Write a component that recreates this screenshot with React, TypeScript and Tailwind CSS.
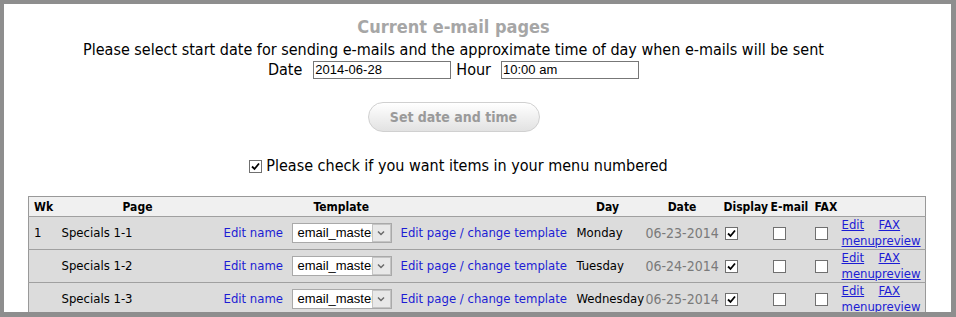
const rows = [
  { wk: "1", page: "Specials 1-1", day: "Monday", date: "06-23-2014" },
  { wk: "", page: "Specials 1-2", day: "Tuesday", date: "06-24-2014" },
  { wk: "", page: "Specials 1-3", day: "Wednesday", date: "06-25-2014" },
];

const Check = ({ on }: { on?: boolean }) => (
  <span className="inline-flex w-[13px] h-[13px] border border-[#707070] bg-white items-center justify-center align-middle">
    {on && (
      <svg width="9" height="9" viewBox="0 0 9 9">
        <path d="M1 4.5 L3.5 7 L8 1.5" fill="none" stroke="#000" strokeWidth="1.8" />
      </svg>
    )}
  </span>
);

const FakeSelect = () => (
  <div className="flex w-[100px] h-[20px] border border-[#a9a9a9] bg-white font-['Liberation_Sans',sans-serif] text-[13px] leading-[18px]">
    <span className="flex-1 overflow-hidden whitespace-nowrap pl-[5px]">email_master</span>
    <span className="w-[19px] h-[18px] bg-[#e8e8e8] border border-[#c4c4c4] flex items-center justify-center">
      <svg width="8" height="6" viewBox="0 0 8 6">
        <path d="M1 1.5 L4 4.5 L7 1.5" fill="none" stroke="#6a6a6a" strokeWidth="1.5" />
      </svg>
    </span>
  </div>
);

const App = () => {
  return (
    <div className="w-[956px] h-[317px] bg-[#8e8e8e] pt-[4px] pl-[4px] pr-[5px] pb-[5px]">
      <div className="h-full bg-white overflow-hidden font-['DejaVu_Sans_Condensed','Noto_Sans',sans-serif] text-black">
        <div className="pr-[48px] flex flex-col items-center">
          <h1 className="pt-[12px] text-[18px] leading-[22px] font-bold text-[#a6a6a6]">Current e-mail pages</h1>
          <p className="mt-[2px] text-[16px] leading-[20px] whitespace-nowrap">
            Please select start date for sending e-mails and the approximate time of day when e-mails will be sent
          </p>
          <div className="mt-[1px] flex items-center text-[16px] leading-[18px]">
            <span>Date</span>
            <input
              readOnly
              value="2014-06-28"
              className="ml-[11px] w-[138px] h-[18px] border border-[#777] px-[1px] font-['Liberation_Sans',sans-serif] text-[13px] outline-none"
            />
            <span className="ml-[5px]">Hour</span>
            <input
              readOnly
              value="10:00 am"
              className="ml-[10px] w-[138px] h-[18px] border border-[#777] px-[1px] font-['Liberation_Sans',sans-serif] text-[13px] outline-none"
            />
          </div>
          <button className="mt-[23px] w-[172px] h-[30px] rounded-full border border-[#d0d0d0] bg-gradient-to-b from-white to-[#e2e2e2] text-[14px] font-bold text-[#9a9a9a]">
            Set date and time
          </button>
          <div className="mt-[24px] ml-[10px] flex items-center gap-[4px] text-[16px] leading-[20px]">
            <Check on />
            <span>Please check if you want items in your menu numbered</span>
          </div>
        </div>

        <table className="mt-[20px] ml-[24px] w-[897px] table-fixed border-collapse border border-[#999] text-[13px] leading-[16px]">
          <colgroup>
            <col className="w-[28px]" />
            <col className="w-[162px]" />
            <col className="w-[69px]" />
            <col className="w-[108px]" />
            <col className="w-[177px]" />
            <col className="w-[70px]" />
            <col className="w-[79px]" />
            <col className="w-[48px]" />
            <col className="w-[44px]" />
            <col className="w-[26px]" />
            <col className="w-[34px]" />
            <col className="w-[52px]" />
          </colgroup>
          <thead>
            <tr className="bg-[#f0f0f0] h-[20px] font-bold text-[12px] whitespace-nowrap">
              <th className="text-left pl-[5px]">Wk</th>
              <th className="text-center">Page</th>
              <th colSpan={3} className="text-left pl-[95px]">Template</th>
              <th className="text-center">Day</th>
              <th className="text-center">Date</th>
              <th className="text-left pl-[2px]">Display</th>
              <th className="text-left pl-[1px]">E-mail</th>
              <th className="text-left pl-[1px]">FAX</th>
              <th />
              <th />
            </tr>
          </thead>
          <tbody>
            {rows.map((r) => (
              <tr key={r.page} className="bg-[#dcdcdc] border-t border-[#a0a0a0] h-[33px]">
                <td className="pl-[5px]">{r.wk}</td>
                <td className="pl-[5px] whitespace-nowrap">{r.page}</td>
                <td className="pl-[5px] whitespace-nowrap text-[#1c1cd4]">Edit name</td>
                <td className="pl-[4px]"><FakeSelect /></td>
                <td className="pl-[5px] whitespace-nowrap text-[#1c1cd4]">Edit page / change template</td>
                <td className="pl-[4px] whitespace-nowrap">{r.day}</td>
                <td className="pl-[3px] whitespace-nowrap text-[14px] text-[#7a7a7a]">{r.date}</td>
                <td className="pl-[3px]"><Check on /></td>
                <td className="pl-[3px]"><Check /></td>
                <td className="pl-[1px]"><Check /></td>
                <td className="pl-[2px] text-[#1c1cd4] underline whitespace-nowrap">
                  Edit<br />menu
                </td>
                <td className="pl-[1px] text-[#1c1cd4] whitespace-nowrap">
                  <span className="ml-[4px] underline">FAX</span>
                  <br />
                  <span className="underline">preview</span>
                </td>
              </tr>
            ))}
          </tbody>
        </table>
      </div>
    </div>
  );
};

export default App;
